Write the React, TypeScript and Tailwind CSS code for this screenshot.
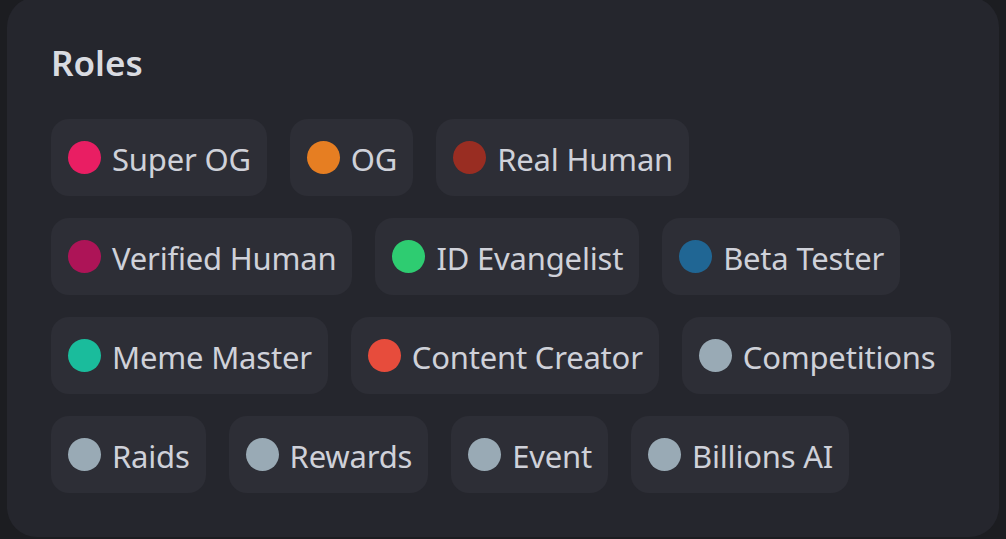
import React from 'react';

interface Role {
  name: string;
  color: string;
}

const rows: Role[][] = [
  [
    { name: 'Super OG', color: '#e91e63' },
    { name: 'OG', color: '#e67e22' },
    { name: 'Real Human', color: '#992d22' },
  ],
  [
    { name: 'Verified Human', color: '#ad1457' },
    { name: 'ID Evangelist', color: '#2ecc71' },
    { name: 'Beta Tester', color: '#206694' },
  ],
  [
    { name: 'Meme Master', color: '#1abc9c' },
    { name: 'Content Creator', color: '#e74c3c' },
    { name: 'Competitions', color: '#99aab5' },
  ],
  [
    { name: 'Raids', color: '#99aab5' },
    { name: 'Rewards', color: '#99aab5' },
    { name: 'Event', color: '#99aab5' },
    { name: 'Billions AI', color: '#99aab5' },
  ],
];

function RoleChip({ role }: { role: Role }) {
  return (
    <div className="flex items-center h-[77px] pl-[17px] pr-[16px] gap-[11px] rounded-[18px] bg-[#2d2e36]">
      <span className="w-[33px] h-[33px] rounded-full shrink-0" style={{ backgroundColor: role.color }} />
      <span className="mt-[3px] text-[31px] leading-none tracking-[-0.2px] text-[#cfd1d9] whitespace-nowrap">{role.name}</span>
    </div>
  );
}

export default function App() {
  return (
    <div className="w-[1006px] h-[539px] overflow-hidden bg-[#1c1d21] px-[7px] font-['Noto_Sans',sans-serif]">
      <div className="-mt-[3px] h-[540px] rounded-[30px] bg-[#25262d] pl-[44px] pt-[46px]">
        <h2 className="text-[35px] leading-[40px] font-semibold text-[#d9dbe1]">Roles</h2>
        <div className="mt-[36px] flex flex-col gap-[22px]">
          {rows.map((row, i) => (
            <div key={i} className="flex gap-[23px]">
              {row.map(r => (
                <RoleChip key={r.name} role={r} />
              ))}
            </div>
          ))}
        </div>
      </div>
    </div>
  );
}
